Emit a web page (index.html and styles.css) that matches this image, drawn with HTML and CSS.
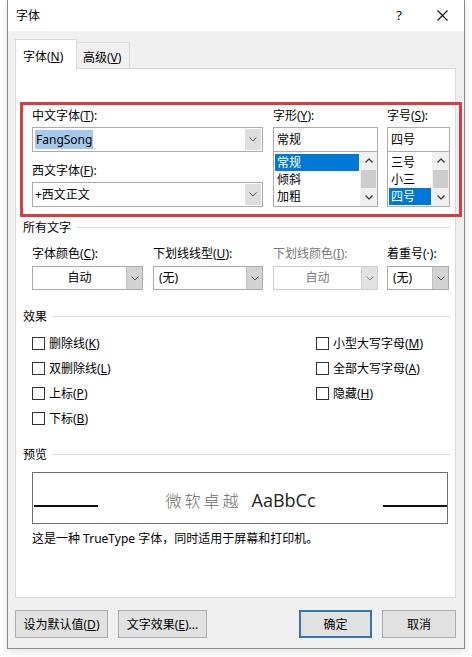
FILE: index.html
```html
<!DOCTYPE html>
<html lang="zh-CN">
<head>
  <meta charset="UTF-8">
  <meta name="viewport" content="width=device-width, initial-scale=1.0">
  <title>字体</title>
  <link rel="stylesheet" href="styles.css">
</head>
<body>
  <div class="dialog">
    <div class="titlebar">
      <span class="title">字体</span>
      <span class="help">?</span>
      <svg class="close" width="11" height="11" viewBox="0 0 11 11">
        <path d="M0.5 0.5 L10.5 10.5 M10.5 0.5 L0.5 10.5" stroke="#111" stroke-width="1.1" fill="none"/>
      </svg>
    </div>

    <div class="dialog-body">
      <div class="tabs">
        <div class="tab active">字体(<u>N</u>)</div>
        <div class="tab">高级(<u>V</u>)</div>
      </div>

      <div class="panel">
        <!-- font / style / size -->
        <div class="font-box">
          <div class="font-col">
            <label>中文字体(<u>T</u>):</label>
            <div class="combo edit">
              <span class="value"><span class="selection">FangSong</span></span>
              <span class="drop"><svg width="8" height="5" viewBox="0 0 8 5"><path d="M0.5 0.5 L4 4 L7.5 0.5" stroke="#555" fill="none"/></svg></span>
            </div>
            <label class="second">西文字体(<u>F</u>):</label>
            <div class="combo edit">
              <span class="value">+西文正文</span>
              <span class="drop"><svg width="8" height="5" viewBox="0 0 8 5"><path d="M0.5 0.5 L4 4 L7.5 0.5" stroke="#555" fill="none"/></svg></span>
            </div>
          </div>

          <div class="font-col">
            <label>字形(<u>Y</u>):</label>
            <div class="textbox">常规</div>
            <div class="listbox">
              <ul class="items">
                <li class="selected">常规</li>
                <li>倾斜</li>
                <li>加粗</li>
              </ul>
              <div class="scrollbar">
                <span class="arrow"><svg width="8" height="5" viewBox="0 0 8 5"><path d="M0.5 4.5 L4 1 L7.5 4.5" stroke="#444" stroke-width="1.3" fill="none"/></svg></span>
                <span class="thumb"></span>
                <span class="arrow"><svg width="8" height="5" viewBox="0 0 8 5"><path d="M0.5 0.5 L4 4 L7.5 0.5" stroke="#444" stroke-width="1.3" fill="none"/></svg></span>
              </div>
            </div>
          </div>

          <div class="font-col">
            <label>字号(<u>S</u>):</label>
            <div class="textbox">四号</div>
            <div class="listbox">
              <ul class="items">
                <li>三号</li>
                <li>小三</li>
                <li class="selected">四号</li>
              </ul>
              <div class="scrollbar">
                <span class="arrow"><svg width="8" height="5" viewBox="0 0 8 5"><path d="M0.5 4.5 L4 1 L7.5 4.5" stroke="#444" stroke-width="1.3" fill="none"/></svg></span>
                <span class="thumb"></span>
                <span class="arrow"><svg width="8" height="5" viewBox="0 0 8 5"><path d="M0.5 0.5 L4 4 L7.5 0.5" stroke="#444" stroke-width="1.3" fill="none"/></svg></span>
              </div>
            </div>
          </div>
        </div>

        <div class="group-title first"><span>所有文字</span><span class="rule"></span></div>
        <div class="all-text">
          <div class="field">
            <label>字体颜色(<u>C</u>):</label>
            <div class="combo pick">
              <span class="value center">自动</span>
              <span class="drop"><svg width="8" height="5" viewBox="0 0 8 5"><path d="M0.5 0.5 L4 4 L7.5 0.5" stroke="#555" fill="none"/></svg></span>
            </div>
          </div>
          <div class="field">
            <label>下划线线型(<u>U</u>):</label>
            <div class="combo pick">
              <span class="value">(无)</span>
              <span class="drop"><svg width="8" height="5" viewBox="0 0 8 5"><path d="M0.5 0.5 L4 4 L7.5 0.5" stroke="#555" fill="none"/></svg></span>
            </div>
          </div>
          <div class="field disabled">
            <label>下划线颜色(<u>I</u>):</label>
            <div class="combo pick">
              <span class="value center">自动</span>
              <span class="drop"><svg width="8" height="5" viewBox="0 0 8 5"><path d="M0.5 0.5 L4 4 L7.5 0.5" stroke="#888" fill="none"/></svg></span>
            </div>
          </div>
          <div class="field">
            <label>着重号(·):</label>
            <div class="combo pick">
              <span class="value">(无)</span>
              <span class="drop"><svg width="8" height="5" viewBox="0 0 8 5"><path d="M0.5 0.5 L4 4 L7.5 0.5" stroke="#555" fill="none"/></svg></span>
            </div>
          </div>
        </div>

        <div class="group-title effects-title"><span>效果</span><span class="rule"></span></div>
        <div class="effects">
          <label class="check"><span class="box"></span><span>删除线(<u>K</u>)</span></label>
          <label class="check"><span class="box"></span><span>小型大写字母(<u>M</u>)</span></label>
          <label class="check"><span class="box"></span><span>双删除线(<u>L</u>)</span></label>
          <label class="check"><span class="box"></span><span>全部大写字母(<u>A</u>)</span></label>
          <label class="check"><span class="box"></span><span>上标(<u>P</u>)</span></label>
          <label class="check"><span class="box"></span><span>隐藏(<u>H</u>)</span></label>
          <label class="check"><span class="box"></span><span>下标(<u>B</u>)</span></label>
        </div>

        <div class="group-title preview-title"><span>预览</span><span class="rule"></span></div>
        <div class="preview">
          <span class="baseline"></span>
          <span class="sample"><span class="sample-cn">微软卓越</span><span class="sample-en">AaBbCc</span></span>
          <span class="baseline right"></span>
        </div>
        <p class="preview-note">这是一种 TrueType 字体，同时适用于屏幕和打印机。</p>
      </div>

      <div class="buttons">
        <button class="btn wide">设为默认值(<u>D</u>)</button>
        <button class="btn effects-btn">文字效果(<u>E</u>)...</button>
        <span class="spacer"></span>
        <button class="btn ok">确定</button>
        <button class="btn cancel">取消</button>
      </div>
    </div>
  </div>
</body>
</html>
```

FILE: styles.css
```css
* {
  box-sizing: border-box;
}

body {
  margin: 0;
  height: 657px;
  background-color: #ffffff;
  font-family: "Noto Sans", "Noto Sans CJK SC", sans-serif;
  font-size: 12px;
  color: #000;
}

.dialog {
  margin-left: 7px;
  width: 458px;
  height: 649px;
  border: 1px solid #8c8c8c;
  border-top: none;
  display: flex;
  flex-direction: column;
  box-shadow: 0 3px 8px rgba(0, 0, 0, 0.12);
}

/* title bar */
.titlebar {
  height: 31px;
  background-color: #ffffff;
  display: flex;
  align-items: center;
  padding-left: 8px;
  padding-right: 16px;
}

.title {
  line-height: 17px;
}

.help {
  margin-left: auto;
  font-size: 13px;
  line-height: 17px;
}

.close {
  margin-left: 35px;
}

/* body */
.dialog-body {
  flex: 1;
  background-color: #f0f0f0;
  padding: 8px 8px 0 7px;
  display: flex;
  flex-direction: column;
}

.tabs {
  display: flex;
  align-items: flex-end;
  height: 29px;
}

.tab {
  height: 26px;
  padding: 6px 0 0 6px;
  width: 53px;
  line-height: 17px;
  border: 1px solid #d9d9d9;
  border-left: none;
  border-bottom: none;
  background-color: #f0f0f0;
}

.tab.active {
  width: 62px;
  height: 30px;
  padding: 8px 0 0 7px;
  margin-bottom: -1px;
  border-left: 1px solid #d9d9d9;
  background-color: #ffffff;
  position: relative;
  z-index: 1;
}

.panel {
  height: 530px;
  background-color: #ffffff;
  border: 1px solid #d9d9d9;
  padding: 0 5px 0 7px;
}

label {
  display: block;
  line-height: 17px;
  white-space: nowrap;
}

/* font section (marked in red) */
.font-box {
  margin: 33px -12px 0 -3px;
  border: 3px solid #d4403f;
  padding: 2px 9px 7px 9px;
  display: grid;
  grid-template-columns: 231px 105px 62px;
  column-gap: 10px;
}

.font-box .font-col:last-child {
  margin-left: -1px;
}

.font-col label {
  margin-bottom: 3px;
}

.font-col label.second {
  margin-top: 10px;
}

.combo {
  display: flex;
  height: 25px;
  border: 1px solid #acacac;
  background-color: #ffffff;
}

.combo .value {
  flex: 1;
  padding-left: 2px;
  line-height: 23px;
  white-space: nowrap;
}

.combo .value.center {
  text-align: center;
}

.selection {
  background-color: #a5c9ea;
  padding: 1px 1px;
}

.combo .drop {
  width: 16px;
  display: flex;
  align-items: center;
  justify-content: center;
  background-color: #e3e3e3;
}

.combo.edit .drop {
  margin: 1px 1px 1px 0;
  background-color: #dedede;
}

.textbox {
  height: 25px;
  border: 1px solid #acacac;
  padding-left: 3px;
  line-height: 23px;
}

.listbox {
  display: flex;
  height: 55px;
  border: 1px solid #acacac;
  border-top: none;
}

.items {
  flex: 1;
  list-style: none;
  margin: 0;
  padding: 2px 1px 0 1px;
}

.items li {
  line-height: 17px;
  padding-left: 2px;
}

.items li.selected {
  background-color: #0078d7;
  color: #ffffff;
}

.scrollbar {
  width: 17px;
  display: flex;
  flex-direction: column;
  background-color: #f0f0f0;
}

.scrollbar .arrow {
  height: 17px;
  display: flex;
  align-items: center;
  justify-content: center;
}

.scrollbar .thumb {
  flex: 1;
  margin: 1px 1px;
  background-color: #cdcdcd;
}

/* group titles */
.group-title {
  display: flex;
  align-items: center;
  gap: 5px;
  line-height: 17px;
}

.group-title .rule {
  flex: 1;
  height: 1px;
  background-color: #dcdcdc;
}

.group-title.first {
  margin-top: 2px;
}

.effects-title {
  margin-top: 18px;
}

.preview-title {
  margin-top: 19px;
}

/* all text row */
.all-text {
  margin-top: 9px;
  padding-left: 9px;
  display: grid;
  grid-template-columns: 111px 110px 105px 61px;
  column-gap: 10px;
}

.all-text .field:last-child {
  margin-left: -1px;
}

.field label {
  margin-bottom: 4px;
}

.combo.pick {
  height: 24px;
}

.combo.pick .value {
  line-height: 22px;
  padding-left: 5px;
}

.combo.pick .value.center {
  padding-left: 0;
}

.combo.pick .drop {
  background-color: #d3d3d3;
  border-left: 1px solid #c2c2c2;
}

.field.disabled label,
.field.disabled .value {
  color: #7a7a7a;
}

.field.disabled .combo {
  border-color: #cccccc;
}

.field.disabled .drop {
  background-color: #e2e2e2;
  border-left-color: #d0d0d0;
}

/* effects */
.effects {
  margin-top: 10px;
  padding-left: 9px;
  display: grid;
  grid-template-columns: 284px auto;
  row-gap: 8px;
}

.check {
  display: flex;
  align-items: center;
  gap: 4px;
}

.check .box {
  width: 13px;
  height: 13px;
  border: 1px solid #333333;
  background-color: #ffffff;
}

/* preview */
.preview {
  margin: 9px 0 0 9px;
  width: 416px;
  height: 52px;
  border: 1px solid #6e6e6e;
  display: flex;
  padding: 0 0 0 1px;
}

.baseline {
  width: 64px;
  height: 2px;
  background-color: #111111;
  align-self: flex-end;
  margin-bottom: 16px;
}

.sample {
  flex: 1;
  text-align: center;
  align-self: center;
  margin-top: 3px;
  white-space: nowrap;
}

.sample-cn {
  font-family: "Noto Sans CJK SC", sans-serif;
  font-size: 16px;
  font-weight: 300;
  letter-spacing: 3px;
  color: #6a6a6a;
  margin-right: 10px;
}

.sample-en {
  font-family: "Open Sans", sans-serif;
  font-size: 18px;
  color: #222222;
}

.preview-note {
  margin: 6px 0 0 9px;
  line-height: 17px;
}

/* buttons */
.buttons {
  margin-top: 12px;
  display: flex;
  gap: 10px;
}

.spacer {
  flex: 1;
}

.btn {
  height: 28px;
  font-family: inherit;
  font-size: 12px;
  color: #000;
  background-color: #e1e1e1;
  border: 1px solid #adadad;
  padding: 0;
}

.btn.wide {
  width: 93px;
}

.btn.effects-btn {
  width: 89px;
}

.btn.ok {
  width: 73px;
  border: 2px solid #2f78b5;
}

.btn.cancel {
  width: 74px;
}
```
